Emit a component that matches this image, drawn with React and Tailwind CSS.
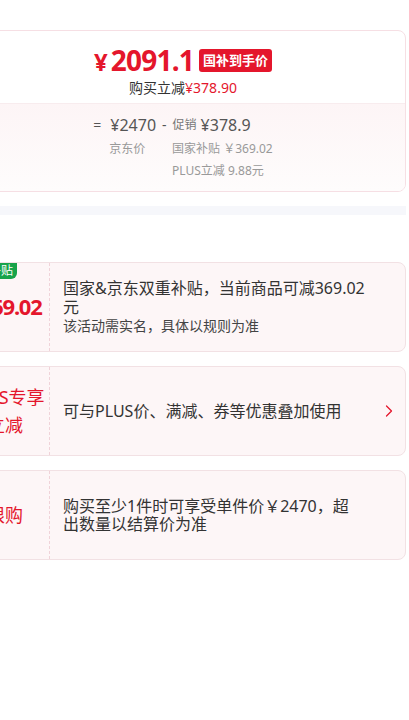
import React from 'react';
import { ChevronRight } from 'lucide-react';

const font = { fontFamily: '"Noto Sans", "Noto Sans CJK SC", sans-serif' };

function PromoRow({ left, children, badge, arrow }) {
  return (
    <div className="relative flex h-[90px] rounded-lg border border-[#f2e1e4] bg-[#fdf6f7]">
      {badge && (
        <span className="absolute left-0 top-0 rounded-tl-lg rounded-br-md bg-[#17a34a] px-1 text-[12px] leading-[16px] text-white">
          {badge}
        </span>
      )}
      <div className="flex w-[89px] shrink-0 items-center justify-center border-r border-dashed border-[#f0d3d9] text-center text-[#e4162c]">
        {left}
      </div>
      <div className="flex flex-1 items-center pl-[13px] pr-[6px]">
        <div className="w-[310px] text-[16px] text-[#333]">{children}</div>
        {arrow && <ChevronRight className="ml-auto h-5 w-5 shrink-0 text-[#e4162c]" strokeWidth={1.5} />}
      </div>
    </div>
  );
}

export default function App() {
  return (
    <div className="w-[409px] min-h-[720px] overflow-hidden bg-white" style={font}>
      <div className="ml-[-40px] w-[446px] pt-[30px]">
        {/* price card */}
        <div className="overflow-hidden rounded-lg border border-[#f6dfe4] bg-white">
          <div className="flex h-[72px] flex-col items-center pt-[14px]">
            <div className="flex items-center">
              <span className="flex items-baseline font-bold text-[#e4162c]">
                <span className="mr-[3px] text-[24px] leading-none">¥</span>
                <span className="text-[28px] leading-[30px] tracking-[-0.8px]">2091.1</span>
              </span>
              <span className="ml-[5px] rounded-[3px] bg-[#e4162c] px-[4px] text-[13px] font-bold leading-[23px] text-white">国补到手价</span>
            </div>
            <div className="mt-[4px] text-[14px] leading-[18px] text-[#333]">
              购买立减<span className="text-[#e4162c]">¥378.90</span>
            </div>
          </div>
          <div className="h-[88px] border-t border-[#f8ecee] bg-gradient-to-b from-[#fdf5f6] to-[#fefcfc] pt-[10px]">
            <div className="flex justify-center text-[#555]">
              <div className="flex">
                <div className="flex flex-col">
                  <div className="flex items-center text-[16px] leading-[22px]">
                    <span className="mr-[9px] text-[14px]">=</span>
                    <span>¥2470</span>
                  </div>
                  <div className="mt-[4px] pl-[16px] text-[12px] leading-[18px] text-[#999]">京东价</div>
                </div>
                <div className="flex flex-col">
                  <div className="flex items-center text-[16px] leading-[22px]">
                    <span className="mx-[6px] text-[14px]">-</span>
                    <span className="text-[12px] text-[#777]">促销</span>
                    <span className="ml-[4px]">¥378.9</span>
                  </div>
                  <div className="mt-[4px] pl-[16px] text-[12px] leading-[18px] text-[#999]">国家补贴 ￥369.02</div>
                  <div className="mt-[4px] pl-[16px] text-[12px] leading-[18px] text-[#999]">PLUS立减 9.88元</div>
                </div>
              </div>
            </div>
          </div>
        </div>

        <div className="mt-[14px] h-[9px] bg-[#f6f7fb]" />

        <div className="mt-[47px] flex flex-col gap-[14px]">
          <PromoRow
            badge="国家补贴"
            left={<span className="mt-[-3px] text-[22px] font-bold leading-none tracking-[-1.2px]">¥369.02</span>}
          >
            <div className="leading-[19px]">国家&amp;京东双重补贴，当前商品可减369.02<br />元</div>
            <div className="text-[14px] leading-[18px] text-[#444]">该活动需实名，具体以规则为准</div>
          </PromoRow>
          <PromoRow
            arrow
            left={<span className="text-[18px] leading-[28px]">PLUS专享<br />立减</span>}
          >
            <div className="leading-[20px]">可与PLUS价、满减、券等优惠叠加使用</div>
          </PromoRow>
          <PromoRow left={<span className="text-[18px] leading-[24px]">限购</span>}>
            <div className="leading-[18px]">购买至少1件时可享受单件价￥2470，超<br />出数量以结算价为准</div>
          </PromoRow>
        </div>
      </div>
    </div>
  );
}
